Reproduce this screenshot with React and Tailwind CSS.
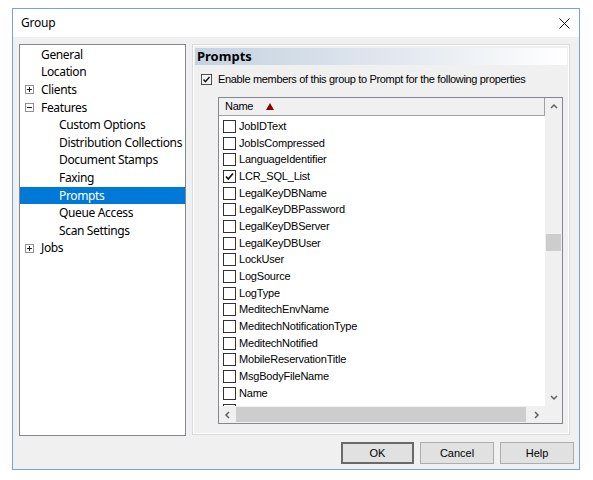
import React from "react";

const tree = [
  { t: "General", lvl: 0 },
  { t: "Location", lvl: 0 },
  { t: "Clients", lvl: 0, box: "plus" },
  { t: "Features", lvl: 0, box: "minus" },
  { t: "Custom Options", lvl: 1 },
  { t: "Distribution Collections", lvl: 1 },
  { t: "Document Stamps", lvl: 1 },
  { t: "Faxing", lvl: 1 },
  { t: "Prompts", lvl: 1, sel: true },
  { t: "Queue Access", lvl: 1 },
  { t: "Scan Settings", lvl: 1 },
  { t: "Jobs", lvl: 0, box: "plus" },
];

const items = [
  ["JobIDText", false],
  ["JobIsCompressed", false],
  ["LanguageIdentifier", false],
  ["LCR_SQL_List", true],
  ["LegalKeyDBName", false],
  ["LegalKeyDBPassword", false],
  ["LegalKeyDBServer", false],
  ["LegalKeyDBUser", false],
  ["LockUser", false],
  ["LogSource", false],
  ["LogType", false],
  ["MeditechEnvName", false],
  ["MeditechNotificationType", false],
  ["MeditechNotified", false],
  ["MobileReservationTitle", false],
  ["MsgBodyFileName", false],
  ["Name", false],
  ["NoneComponentAttachment", false],
];

function ExpandBox({ kind }) {
  return (
    <svg width="9" height="9" viewBox="0 0 9 9" className="shrink-0">
      <rect x="0.5" y="0.5" width="8" height="8" fill="white" stroke="#919191" />
      <line x1="2" y1="4.5" x2="7" y2="4.5" stroke="#222" />
      {kind === "plus" && <line x1="4.5" y1="2" x2="4.5" y2="7" stroke="#222" />}
    </svg>
  );
}

function Check({ checked, size = 13, bg = "white" }) {
  return (
    <svg width={size} height={size} viewBox="0 0 13 13" className="shrink-0">
      <rect x="0.5" y="0.5" width="12" height="12" fill={bg} stroke="#333" />
      {checked && (
        <polyline points="3,6.5 5.3,9 10,3.5" fill="none" stroke="#111" strokeWidth="1.7" />
      )}
    </svg>
  );
}

function Chevron({ dir }) {
  const pts = {
    up: "1,5 4,2 7,5",
    down: "1,2 4,5 7,2",
    left: "5,1 2,4 5,7",
    right: "2,1 5,4 2,7",
  }[dir];
  return (
    <svg width="8" height="8" viewBox="0 0 8 8">
      <polyline points={pts} fill="none" stroke="#606060" strokeWidth="1.5" />
    </svg>
  );
}

export default function App() {
  return (
    <div className="w-[593px] h-[480px] bg-white pt-[8px] pl-[12px] font-['Noto_Sans',sans-serif]">
      <div className="w-[568px] h-[462px] border border-[#7a9fd9] flex flex-col">
        {/* title bar */}
        <div className="h-[28px] bg-white flex items-center justify-between pl-[8px] pr-[9px] shrink-0">
          <span className="text-[12px] tracking-[-0.2px] text-black leading-none">Group</span>
          <svg width="11" height="11" viewBox="0 0 11 11">
            <line x1="0.5" y1="0.5" x2="10.5" y2="10.5" stroke="#111" strokeWidth="1" />
            <line x1="10.5" y1="0.5" x2="0.5" y2="10.5" stroke="#111" strokeWidth="1" />
          </svg>
        </div>
        {/* body */}
        <div className="flex-1 bg-[#f0f0f0] flex flex-col pt-[7px] pl-[6px]">
          <div className="flex gap-[6px]">
            {/* tree */}
            <div className="w-[167px] h-[392px] border border-[#828790] bg-white pt-[1px]">
              {tree.map((n) => (
                <div
                  key={n.t}
                  className={`h-[17.6px] flex items-center text-[12px] tracking-[-0.35px] leading-none ${
                    n.sel ? "bg-[#0078d7] text-white" : "text-black"
                  }`}
                >
                  <div className="w-[21px] pl-[5px] flex items-center shrink-0">
                    {n.box && <ExpandBox kind={n.box} />}
                  </div>
                  <span className={`whitespace-nowrap ${n.lvl === 1 ? "pl-[18px]" : ""}`}>{n.t}</span>
                </div>
              ))}
            </div>
            {/* right panel */}
            <div className="w-[378px] h-[391px] border border-[#dadada]">
              <div className="h-full border border-white px-[1px] pt-[2px] flex flex-col">
                <div className="h-[17px] bg-gradient-to-r from-[#c5d2e0] via-[#dfe6ee] to-white flex items-center pl-[2px]">
                  <span className="text-[13px] font-bold leading-none text-black">Prompts</span>
                </div>
                <div className="flex items-center mt-[9px] pl-[6px] gap-[6px] h-[11px]">
                  <Check checked size={11} bg="#f4f4f4" />
                  <span className="font-['Liberation_Sans',sans-serif] text-[11px] tracking-[-0.33px] leading-none text-black whitespace-nowrap">
                    Enable members of this group to Prompt for the following properties
                  </span>
                </div>
                {/* list */}
                <div className="ml-[23px] mt-[12px] w-[345px] h-[327px] border border-[#828790] bg-white flex flex-col font-['Liberation_Sans',sans-serif]">
                  <div className="flex flex-1 min-h-0">
                    <div className="flex-1 flex flex-col min-w-0">
                      <div className="h-[18px] shrink-0 bg-[#f0f0f0] border-b border-r border-[#a0a0a0] flex items-center pl-[6px]">
                        <span className="text-[11px] tracking-[-0.3px] leading-none text-black">Name</span>
                        <svg width="8" height="7" viewBox="0 0 8 7" className="ml-[13px]">
                          <polygon points="0,7 4,0 8,7" fill="#8b0000" />
                        </svg>
                      </div>
                      <div className="flex-1 overflow-hidden pt-[2px]">
                        {items.map(([name, c]) => (
                          <div key={name} className="h-[16.7px] flex items-center pl-[4px] gap-[3px]">
                            <Check checked={c} />
                            <span className="text-[11px] tracking-[-0.2px] leading-none text-black whitespace-nowrap">
                              {name}
                            </span>
                          </div>
                        ))}
                      </div>
                    </div>
                    {/* vertical scrollbar */}
                    <div className="w-[17px] bg-[#f0f0f0] flex flex-col shrink-0">
                      <div className="h-[17px] flex items-center justify-center">
                        <Chevron dir="up" />
                      </div>
                      <div className="flex-1 relative">
                        <div className="absolute left-[1px] right-[1px] top-[119px] h-[17px] bg-[#cdcdcd]" />
                      </div>
                      <div className="h-[17px] flex items-center justify-center">
                        <Chevron dir="down" />
                      </div>
                    </div>
                  </div>
                  {/* horizontal scrollbar */}
                  <div className="h-[17px] flex shrink-0">
                    <div className="flex-1 bg-[#f0f0f0] flex items-center">
                      <div className="w-[17px] flex items-center justify-center">
                        <Chevron dir="left" />
                      </div>
                      <div className="flex-1 h-full py-[1px] pr-[2px]">
                        <div className="h-full bg-[#cdcdcd]" />
                      </div>
                      <div className="w-[17px] flex items-center justify-center">
                        <Chevron dir="right" />
                      </div>
                    </div>
                    <div className="w-[17px] bg-[#f0f0f0]" />
                  </div>
                </div>
              </div>
            </div>
          </div>
          {/* buttons */}
          <div className="flex justify-end gap-[6px] pr-[5px] mt-[6px] font-['Liberation_Sans',sans-serif]">
            <button className="w-[73px] h-[22px] bg-[#e1e1e1] border-2 border-[#6a6a6a] text-[11px] text-black">
              OK
            </button>
            <button className="w-[74px] h-[22px] bg-[#e1e1e1] border border-[#adadad] text-[11px] text-black">
              Cancel
            </button>
            <button className="w-[74px] h-[22px] bg-[#e1e1e1] border border-[#adadad] text-[11px] text-black">
              Help
            </button>
          </div>
        </div>
      </div>
    </div>
  );
}
